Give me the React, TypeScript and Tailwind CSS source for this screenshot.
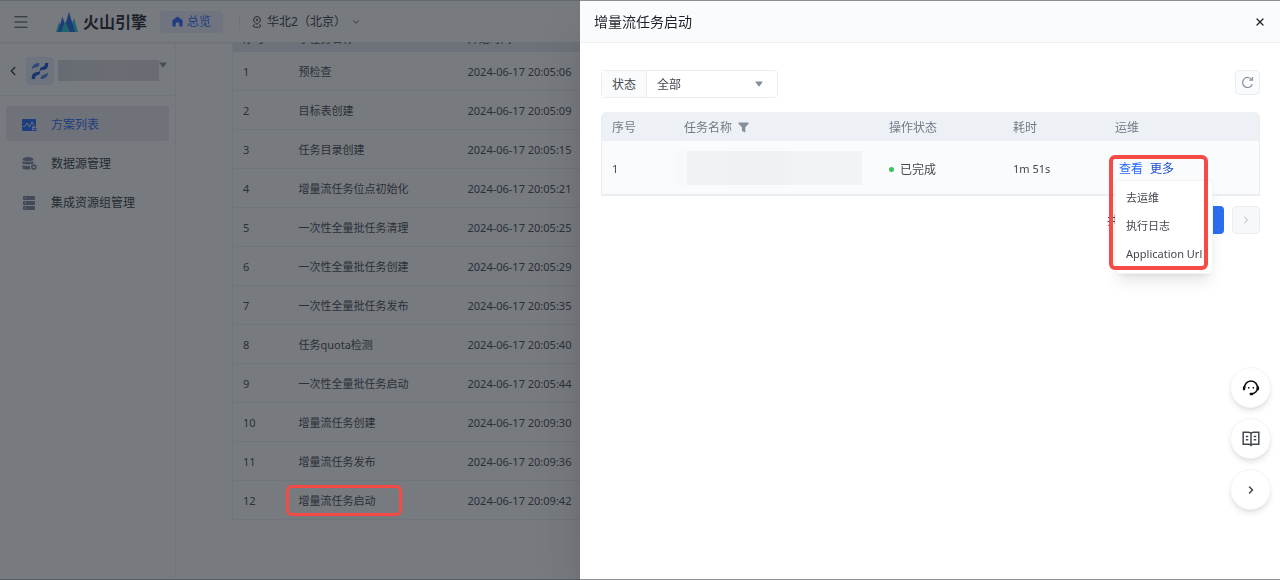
import { useState } from "react"
import { ChevronDown, ChevronLeft, ChevronRight, Menu, X } from "lucide-react"

const FONT = "font-['Noto_Sans','Noto_Sans_CJK_SC',sans-serif]"

const steps = [
  { name: "预检查", time: "2024-06-17 20:05:06" },
  { name: "目标表创建", time: "2024-06-17 20:05:09" },
  { name: "任务目录创建", time: "2024-06-17 20:05:15" },
  { name: "增量流任务位点初始化", time: "2024-06-17 20:05:21" },
  { name: "一次性全量批任务清理", time: "2024-06-17 20:05:25" },
  { name: "一次性全量批任务创建", time: "2024-06-17 20:05:29" },
  { name: "一次性全量批任务发布", time: "2024-06-17 20:05:35" },
  { name: "任务quota检测", time: "2024-06-17 20:05:40" },
  { name: "一次性全量批任务启动", time: "2024-06-17 20:05:44" },
  { name: "增量流任务创建", time: "2024-06-17 20:09:30" },
  { name: "增量流任务发布", time: "2024-06-17 20:09:36" },
  { name: "增量流任务启动", time: "2024-06-17 20:09:42", marked: true },
]

function VolcanoLogo() {
  return (
    <svg width="22" height="20" viewBox="0 0 22 20">
      <path d="M13 20 18 6l4 14z" fill="#22c7c8" />
      <path d="M0 20 3 10l4 10z" fill="#22c7c8" />
      <path d="M2 20 6.500 4.500 11 20z" fill="#1d63f2" />
      <path d="M7 20 13 0l6 20z" fill="#1d63f2" />
      <path d="M5 20 9 9l5 11z" fill="#22c7c8" />
    </svg>
  )
}

function HomeIcon() {
  return (
    <svg width="11" height="11" viewBox="0 0 11 11" fill="#2468ff">
      <path d="M5.500.400 10.200 4c.3.200.4.500.4.800v5c0 .4-.3.700-.7.700H7.300V8c0-1-.8-1.800-1.800-1.800S3.700 7 3.700 8v2.500H1.100c-.4 0-.7-.3-.7-.7v-5c0-.3.100-.6.400-.8z" />
    </svg>
  )
}

function RegionIcon() {
  return (
    <svg width="10" height="12" viewBox="0 0 10 12" fill="none" stroke="#33373f">
      <path d="M5 8.300C3 6.800 1.600 5.500 1.600 3.900a3.400 3.400 0 0 1 6.800 0C8.400 5.500 7 6.800 5 8.300z" />
      <circle cx="5" cy="3.900" r=".8" />
      <path d="M2.500 8.300 1.200 10c0 .8 1.500 1.300 3.800 1.300S8.800 10.800 8.800 10L7.500 8.300" />
    </svg>
  )
}

function ProductIcon() {
  return (
    <svg width="18" height="18" viewBox="0 0 18 18">
      <g fill="#4a86f0">
        <path d="M.8 8C.8 3.500 3.600.900 8.400.900c0 3-1 3.900-3.400 4.400C3 5.700 1.700 6.300.8 8z" />
        <path d="M17.200 10c0 4.500-2.800 7.100-7.600 7.100 0-3 1-3.900 3.400-4.400 2-.4 3.300-1 4.200-2.700z" />
      </g>
      <g fill="#1552d6">
        <path d="M8.800 9.200c-.2-3 .8-4 3-4.500C13.600 4.200 13.900 3 14 .900h3.200c.3 4.300-1.200 6.400-4.700 6.900-1.900.2-2.900.5-3.700 1.400z" />
        <path d="M9.200 8.800c.2 3-.8 4-3 4.500-1.800.5-2.100 1.700-2.200 3.800H.8c-.3-4.300 1.200-6.400 4.700-6.900 1.900-.2 2.900-.5 3.700-1.400z" />
      </g>
    </svg>
  )
}

function PlanIcon() {
  return (
    <svg width="15" height="14" viewBox="0 0 15 14">
      <path d="M1 1h12a1 1 0 0 1 1 1v6.500h-4V13H1a1 1 0 0 1-1-1V2a1 1 0 0 1 1-1z" fill="#1f6bff" />
      <path d="M1 8.500h1.500L5 5l2.500 4L10 4l2 3.500" fill="none" stroke="#dbe8ff" />
      <path d="M10.500 10.800h4l-1.500-1.300M14.500 12.500h-4" fill="none" stroke="#1f6bff" />
    </svg>
  )
}

function SourceIcon() {
  return (
    <svg width="15" height="14" viewBox="0 0 15 14" fill="#7b849c">
      <ellipse cx="6" cy="2.200" rx="5.500" ry="2.200" />
      <path d="M.5 4c1.500 1.300 9.500 1.300 11 0v2.500c-1.500 1.200-9.500 1.200-11 0z" />
      <path d="M.5 8c1.200 1 5 1.200 7.500.9v3.500c-3 .5-7.500.1-7.500-1.400z" />
      <path d="m11.800 7 2.700 1.500v3.200l-2.700 1.600-2.700-1.600V8.500zm0 1.900a1.200 1.200 0 1 0 0 2.400 1.200 1.200 0 0 0 0-2.400z" fillRule="evenodd" />
    </svg>
  )
}

function GroupIcon() {
  return (
    <svg width="15" height="14" viewBox="0 0 15 14">
      <g fill="#7b849c">
        <rect x="1" width="12" height="4" rx=".8" />
        <rect x="1" y="5" width="12" height="4" rx=".8" />
        <rect x="1" y="10" width="12" height="4" rx=".8" />
      </g>
      <g fill="#fff">
        <circle cx="3.500" cy="2" r=".7" />
        <circle cx="3.500" cy="7" r=".7" />
        <circle cx="3.500" cy="12" r=".7" />
      </g>
    </svg>
  )
}

function Caret({ className }: { className?: string }) {
  return (
    <svg className={className} width="8" height="6" viewBox="0 0 8 6" fill="#86909c">
      <path d="M.8.500h6.400c.4 0 .6.400.3.700L4.400 5.200a.5.500 0 0 1-.8 0L.5 1.200C.2.900.4.500.8.500z" />
    </svg>
  )
}

function FilterIcon() {
  return (
    <svg width="11" height="11" viewBox="0 0 11 11" fill="#86909c">
      <path d="M.5.500h10v1.300L7.300 5.200v5.300L3.900 9V5.200L.5 1.800z" />
    </svg>
  )
}

function RefreshIcon() {
  return (
    <svg width="13" height="13" viewBox="0 0 13 13" fill="none" stroke="#86909c" strokeWidth="1.200">
      <path d="M11.300 8.200A5 5 0 1 1 10.700 3.600" />
      <path d="M11.500 1v3.200H8.300" />
    </svg>
  )
}

function HeadsetIcon() {
  return (
    <svg width="18" height="18" viewBox="0 0 18 18" fill="none" stroke="#0c0d0e" strokeWidth="1.600">
      <path d="M2.700 9.500a6.400 6.400 0 1 1 12.600 0c-.3 2.600-2.300 4.800-5.300 5.300" />
      <path d="M2 8.300v2M16 8.300v2" strokeWidth="2.200" strokeLinecap="round" />
      <path d="M8.800 15h1.200" strokeWidth="2.600" strokeLinecap="round" />
      <path d="M6.700 8v1.500M11.300 8v1.500" strokeWidth="1.400" />
    </svg>
  )
}

function DocsIcon() {
  return (
    <svg width="18" height="16" viewBox="0 0 18 16" fill="none" stroke="#41464f" strokeWidth="1.500">
      <path d="M9 2.500C8.500 1.600 7.500 1.300 6.500 1.300H1.200v11.900h5.500c1 0 1.800.3 2.300 1.100.5-.8 1.300-1.100 2.300-1.100h5.500V1.300h-5.300C10.500 1.300 9.500 1.600 9 2.500zM9 2.500v12" />
      <path d="M3.800 5.500h2.500M3.800 8.800h2.500M11.700 5.500h2.500M11.700 8.800h2.500" />
    </svg>
  )
}

const navItems = [
  { label: "方案列表", icon: <PlanIcon />, active: true },
  { label: "数据源管理", icon: <SourceIcon /> },
  { label: "集成资源组管理", icon: <GroupIcon /> },
]

function TopBar() {
  return (
    <header className="flex h-[42px] shrink-0 items-center border-t border-[#d0d3d9] bg-white shadow-sm">
      <button type="button" aria-label="菜单" className="ml-3 text-[#33373f]">
        <Menu size={18} strokeWidth={1.5} />
      </button>
      <a href="#home" className="ml-[26px] flex items-center gap-[5px]">
        <VolcanoLogo />
        <span className="text-base leading-5 font-bold text-[#1d2129]">火山引擎</span>
      </a>
      <a href="#overview" className="ml-[13px] flex h-[22px] items-center gap-1 rounded bg-[#eaf1ff] px-3 text-xs text-[#2468ff]">
        <HomeIcon />
        总览
      </a>
      <span className="ml-4 h-4 w-px bg-[#e8ebf0]" />
      <button type="button" className="ml-3 flex items-center gap-[5px] text-xs text-[#33373f]">
        <RegionIcon />
        华北2（北京）
        <ChevronDown size={10} />
      </button>
    </header>
  )
}

function Sidebar() {
  return (
    <aside className="w-44 shrink-0 border-r border-[#eef0f4]">
      <div className="flex h-[54px] items-center border-b border-[#eef0f4] pt-1 pl-1.5">
        <button type="button" aria-label="返回" className="text-[#33373f]">
          <ChevronLeft size={14} strokeWidth={2.5} />
        </button>
        <span className="ml-1.5 flex size-7 items-center justify-center rounded bg-[#e6f0fc]">
          <ProductIcon />
        </span>
        <span className="ml-1 h-[21px] w-[101px] bg-linear-to-r from-[#d6dae2] via-[#dfe0e2] to-[#dbdcde]" />
        <Caret className="mb-3" />
      </div>
      <nav className="mt-2.5 flex flex-col gap-1 px-1.5">
        {navItems.map((item) => (
          <a
            key={item.label}
            href="#nav"
            className={
              item.active
                ? "flex h-[35px] items-center gap-3.5 rounded bg-[#ebecee] pt-0.5 pl-4 text-xs text-[#2468ff]"
                : "flex h-[35px] items-center gap-3.5 rounded pt-0.5 pl-4 text-xs text-[#33373f]"
            }
          >
            {item.icon}
            {item.label}
          </a>
        ))}
      </nav>
    </aside>
  )
}

function StepTable() {
  return (
    <table className="-mt-5 w-full table-fixed border border-[#eef0f4] text-left text-[11px] text-[#42464e]">
      <thead>
        <tr className="h-[29px] bg-[#e5e9f0]">
          <th className="w-[56px] pt-1 pl-2.5 font-normal">序号</th>
          <th className="w-[168px] pt-1 pl-2.5 font-normal">子任务名称</th>
          <th className="pt-1 pl-[11px] font-normal">开始时间</th>
        </tr>
      </thead>
      <tbody>
        {steps.map((step, i) => (
          <tr key={step.name} className="h-[39px] border-b border-[#eef0f4]">
            <td className="pt-0.5 pl-2.5">{i + 1}</td>
            <td className="pt-0.5 pl-2.5">
              <span className="relative">
                {step.name}
                {step.marked && (
                  <span className="absolute -top-2 -right-[26px] -bottom-2 -left-[13px] z-20 rounded-md border-3 border-[#f54a45]" />
                )}
              </span>
            </td>
            <td className="pt-0.5 pl-[11px]">{step.time}</td>
          </tr>
        ))}
      </tbody>
    </table>
  )
}

function MoreMenu() {
  return (
    <div className="absolute top-full -left-1 z-10 mt-px flex flex-col rounded border border-[#f2f3f5] bg-white py-1 whitespace-nowrap text-[#42464e] shadow-lg">
      {["去运维", "执行日志", "Application Url"].map((label) => (
        <button key={label} type="button" className="h-7 px-2.5 text-left text-[11px]">
          {label}
        </button>
      ))}
    </div>
  )
}

function TaskTable() {
  const [menuOpen, setMenuOpen] = useState(true)

  return (
    <div className="rounded-t-md border-x border-b-2 border-[#eaedf1] bg-[#edf0f5]">
      <table className="w-full table-fixed text-left text-xs text-[#42464e]">
        <thead>
          <tr className="h-[29px] text-[#737a87]">
            <th className="w-[71px] pt-0.5 pl-2.5 font-normal">序号</th>
            <th className="w-[205px] pt-0.5 pl-[11px] font-normal">
              <span className="flex items-center gap-1.5">
                任务名称
                <FilterIcon />
              </span>
            </th>
            <th className="w-[124px] pt-0.5 pl-[11px] font-normal">操作状态</th>
            <th className="w-[103px] pt-0.5 pl-[11px] font-normal">耗时</th>
            <th className="pt-0.5 pl-2.5 font-normal">运维</th>
          </tr>
        </thead>
        <tbody>
          <tr className="h-[53px] bg-[#fafbfd]">
            <td className="pt-1 pl-2.5 text-[11px]">1</td>
            <td className="pl-0.5">
              <div className="flex h-[34px] w-[187px]">
                <div className="w-3 bg-[#f8f9fb]" />
                <div className="w-10 bg-[#f1f2f4]" />
                <div className="w-16 bg-[#f0f1f3]" />
                <div className="flex-1 bg-[#f2f3f5]" />
              </div>
            </td>
            <td className="pt-1 pl-[11px]">
              <span className="flex items-center gap-1.5">
                <span className="size-[5px] rounded-full bg-[#3ac25c]" />
                已完成
              </span>
            </td>
            <td className="pt-1 pl-[11px] text-[11px]">1m 51s</td>
            <td className="pt-0.5 pl-2.5">
              <div className="relative ml-1 inline-flex h-5 items-center gap-[7px]">
                <a href="#view" className="text-[#2468ff]">查看</a>
                <button type="button" className="text-[#1f49cf]" onClick={() => setMenuOpen(!menuOpen)}>
                  更多
                </button>
                {menuOpen && <MoreMenu />}
                <span className="pointer-events-none absolute -top-1 -left-2.5 z-20 h-[115px] w-[99px] rounded-md border-4 border-[#f54a45]" />
              </div>
            </td>
          </tr>
        </tbody>
      </table>
    </div>
  )
}

function TaskDrawer() {
  return (
    <section
      role="dialog"
      aria-label="增量流任务启动"
      className="fixed inset-y-0 right-0 z-30 w-[700px] max-w-full border-y border-[#8d9095] bg-white shadow-2xl"
    >
      <div className="flex h-[42px] items-center justify-between border-b border-[#edf0f4] bg-[#fafbfd] pr-3 pl-3.5">
        <h2 className="text-sm text-[#1d2129]">增量流任务启动</h2>
        <button type="button" aria-label="关闭" className="p-0.5 text-[#1d2129]">
          <X size={12} strokeWidth={2.5} />
        </button>
      </div>
      <div className="pt-[27px] pr-5 pl-[21px]">
        <div className="mb-3.5 flex items-start justify-between">
          <div className="flex h-7 items-stretch rounded border border-[#eaedf1] text-xs text-[#42464e]">
            <label htmlFor="status" className="flex w-[45px] items-center justify-center border-r border-[#eaedf1] bg-[#fafbfd] pt-0.5">
              状态
            </label>
            <div className="relative flex w-[130px] items-center">
              <select id="status" defaultValue="all" className="h-full w-full appearance-none bg-transparent px-2.5 pt-0.5">
                <option value="all">全部</option>
              </select>
              <Caret className="pointer-events-none absolute right-3.5" />
            </div>
          </div>
          <button
            type="button"
            aria-label="刷新"
            className="flex size-[25px] items-center justify-center rounded border border-[#eaedf1] bg-[#fafbfd]"
          >
            <RefreshIcon />
          </button>
        </div>
        <TaskTable />
        <div className="mt-2.5 flex items-center justify-end gap-2 text-xs text-[#42464e]">
          <span className="mr-2 pt-0.5">共 1 条</span>
          <button type="button" aria-label="上一页" className="flex size-7 items-center justify-center rounded border border-[#eaedf1] bg-[#f6f8fa] text-[#c0c5ce]">
            <ChevronLeft size={12} />
          </button>
          <button type="button" className="size-7 rounded bg-[#2a6ff0] text-white">1</button>
          <button type="button" aria-label="下一页" className="flex size-7 items-center justify-center rounded border border-[#eaedf1] bg-[#f6f8fa] text-[#b0b6c0]">
            <ChevronRight size={12} />
          </button>
        </div>
      </div>
    </section>
  )
}

function FloatingTools() {
  const style = "flex size-[41px] items-center justify-center rounded-full border border-[#f2f3f6] bg-white shadow-md"
  return (
    <div className="fixed right-[9px] bottom-[70px] z-40 flex flex-col gap-2.5">
      <button type="button" aria-label="客服" className={style}>
        <HeadsetIcon />
      </button>
      <button type="button" aria-label="文档" className={style}>
        <DocsIcon />
      </button>
      <button type="button" aria-label="收起" className={style}>
        <ChevronRight size={12} strokeWidth={3} color="#41464f" />
      </button>
    </div>
  )
}

export default function App() {
  return (
    <div className={`flex h-screen flex-col overflow-hidden bg-white ${FONT}`}>
      <TopBar />
      <div className="flex min-h-0 flex-1 border-b border-[#b0b3b8]">
        <Sidebar />
        <main className="min-w-0 flex-1 overflow-hidden pr-6 pl-14">
          <StepTable />
        </main>
      </div>
      <div className="fixed inset-0 z-10 bg-[#1d2129]/60" />
      <TaskDrawer />
      <FloatingTools />
    </div>
  )
}
